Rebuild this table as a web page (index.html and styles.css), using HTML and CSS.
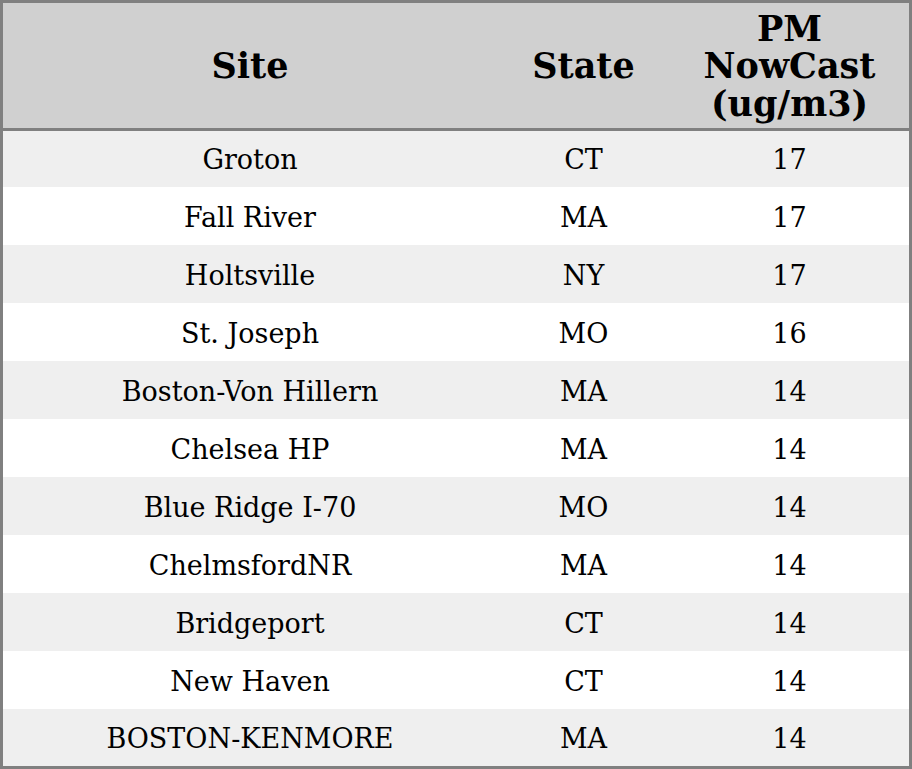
FILE: index.html
```html
<!DOCTYPE html>
<html>
<head>
<meta charset="utf-8">
<link rel="stylesheet" href="styles.css">
</head>
<body>
<table class="tbl">
  <thead>
    <tr><th class="c1">Site</th><th class="c2">State</th><th class="c3">PM NowCast (ug/m3)</th></tr>
  </thead>
  <tbody>
    <tr><td>Groton</td><td>CT</td><td>17</td></tr>
    <tr><td>Fall River</td><td>MA</td><td>17</td></tr>
    <tr><td>Holtsville</td><td>NY</td><td>17</td></tr>
    <tr><td>St. Joseph</td><td>MO</td><td>16</td></tr>
    <tr><td>Boston-Von Hillern</td><td>MA</td><td>14</td></tr>
    <tr><td>Chelsea HP</td><td>MA</td><td>14</td></tr>
    <tr><td>Blue Ridge I-70</td><td>MO</td><td>14</td></tr>
    <tr><td>ChelmsfordNR</td><td>MA</td><td>14</td></tr>
    <tr><td>Bridgeport</td><td>CT</td><td>14</td></tr>
    <tr><td>New Haven</td><td>CT</td><td>14</td></tr>
    <tr><td>BOSTON-KENMORE</td><td>MA</td><td>14</td></tr>
  </tbody>
</table>
</body>
</html>
```
FILE: styles.css
```css
html, body { margin: 0; padding: 0; background: #fff; }
.tbl {
  width: 912px;
  border-collapse: collapse;
  border: 3px solid #808080;
  font-family: "DejaVu Serif", serif;
  color: #000;
  table-layout: fixed;
}
.tbl th {
  background: #d0d0d0;
  font-weight: bold;
  font-size: 35px;
  line-height: 37.5px;
  height: 124px;
  padding: 1px 0 0 0;
  text-align: center;
  border-bottom: 3px solid #808080;
}
.c1 { width: 494px; }
.c2 { width: 173px; }
.c3 { width: auto; padding: 1px 20px 0 !important; }
.tbl td {
  font-size: 27px;
  line-height: 32px;
  text-align: center;
  padding: 3px 0 0 0;
  height: 55px;
}
.tbl tbody tr:first-child td { padding-top: 2px; height: 54px; }
.tbl tbody tr:last-child td { height: 54px; }
.tbl tbody tr:nth-child(odd) td { background: #efefef; }
```
